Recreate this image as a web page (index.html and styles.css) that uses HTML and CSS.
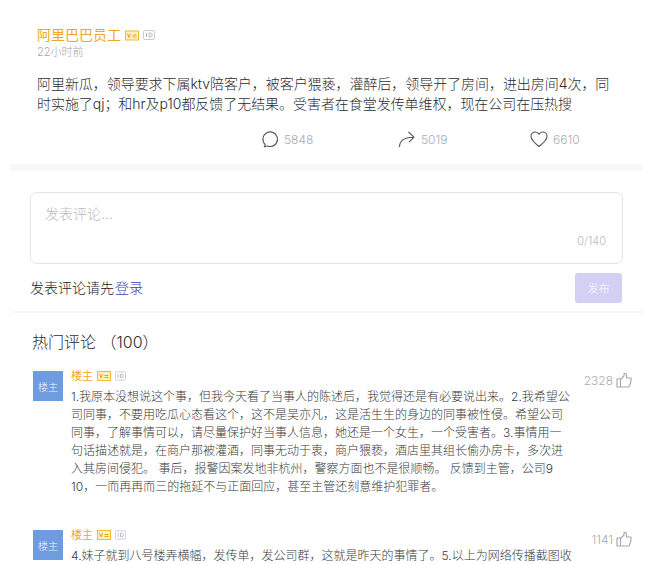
FILE: index.html
```html
<!DOCTYPE html>
<html lang="zh">
<head>
<meta charset="utf-8">
<title>评论</title>
<link rel="stylesheet" href="styles.css">
</head>
<body>
<main class="page">
  <section class="post">
    <div class="author">
      <span class="author-name">阿里巴巴员工</span>
      <svg class="badge-v" viewBox="0 0 14 10"><rect x=".5" y=".5" width="13" height="9" fill="#fff3c4" stroke="#f5b82e"/><path d="M2.500 3l1.500 4L5.500 3M7.500 4.500h4M7.500 6.500h4" fill="none" stroke="#e8a020"/></svg>
      <svg class="badge-id" viewBox="0 0 12 10"><rect x=".5" y=".5" width="11" height="9" rx="1.5" fill="none" stroke="#c9ccd6"/><path d="M3.500 3v4M6 3v4h1.200a2 2 0 0 0 0-4z" fill="none" stroke="#b5b8c4"/></svg>
    </div>
    <div class="time">22小时前</div>
    <p class="post-text">阿里新瓜，领导要求下属ktv陪客户，被客户猥亵，灌醉后，领导开了房间，进出房间4次，同时实施了qj；和hr及p10都反馈了无结果。受害者在食堂发传单维权，现在公司在压热搜</p>
    <div class="stats">
      <span class="stat stat-comment">
        <svg class="stat-icon" viewBox="0 0 18 18"><path d="M3.200 16.600c.7-.6 1-1.200 1-2.100A7.300 7.300 0 1 1 9.500 16.500c-1 0-2-.2-2.900-.6-1 .6-2.100.8-3.400.7z" fill="none" stroke="#55565c" stroke-width="1.100" stroke-linejoin="round"/></svg>
        5848
      </span>
      <span class="stat stat-share">
        <svg class="stat-icon" viewBox="0 0 18 18"><path d="M1.500 17c0-6 3.500-9.500 13.500-9.800M10.500 2l5.500 5.200-5 5" fill="none" stroke="#55565c" stroke-width="1.100" stroke-linejoin="round"/></svg>
        5019
      </span>
      <span class="stat stat-like">
        <svg class="stat-icon" viewBox="0 0 18 18"><path d="M9 16.500C5 13.400 1 10.300 1 6.300 1 3.700 3 2 5.200 2 6.800 2 8.200 2.800 9 4.300 9.800 2.800 11.200 2 12.800 2 15 2 17 3.700 17 6.300c0 4-4 7.100-8 10.200z" fill="none" stroke="#55565c" stroke-width="1.100" stroke-linejoin="round"/></svg>
        6610
      </span>
    </div>
  </section>
  <div class="band"></div>
  <section class="composer">
    <div class="input-box">
      <span class="placeholder">发表评论...</span>
      <span class="counter">0/140</span>
    </div>
    <div class="composer-foot">
      <span class="login-hint">发表评论请先<a class="login-link">登录</a></span>
      <button class="publish">发布</button>
    </div>
  </section>
  <div class="rule"></div>
  <section class="comments">
    <h2 class="comments-title">热门评论 （100）</h2>
    <article class="comment">
      <div class="avatar">楼主</div>
      <div class="comment-body">
        <div class="comment-head">
          <span class="comment-name">楼主</span>
          <svg class="badge-v small" viewBox="0 0 14 10"><rect x=".5" y=".5" width="13" height="9" fill="#fff3c4" stroke="#f5b82e"/><path d="M2.500 3l1.500 4L5.500 3M7.500 4.500h4M7.500 6.500h4" fill="none" stroke="#e8a020"/></svg>
          <svg class="badge-id small" viewBox="0 0 12 10"><rect x=".5" y=".5" width="11" height="9" rx="1.500" fill="none" stroke="#c9ccd6"/><path d="M3.500 3v4M6 3v4h1.200a2 2 0 0 0 0-4z" fill="none" stroke="#b5b8c4"/></svg>
        </div>
        <p class="comment-text">1.我原本没想说这个事，但我今天看了当事人的陈述后，我觉得还是有必要说出来。2.我希望公司同事，不要用吃瓜心态看这个，这不是吴亦凡，这是活生生的身边的同事被性侵。希望公司同事，了解事情可以，请尽量保护好当事人信息，她还是一个女生，一个受害者。3.事情用一句话描述就是，在商户那被灌酒，同事无动于衷，商户猥亵，酒店里其组长偷办房卡，多次进入其房间侵犯。 事后，报警因案发地非杭州，警察方面也不是很顺畅。 反馈到主管，公司9 10，一而再再而三的拖延不与正面回应，甚至主管还刻意维护犯罪者。</p>
      </div>
      <div class="likes">2328
        <svg class="thumb" viewBox="0 0 16 16"><path d="M1 7h3.500v8H1zM4.500 7.500 8 4V1.500c1.300-.5 2.500.5 2.500 2V6H15v3.500L13 15H4.500" fill="none" stroke="#a5a7b0" stroke-width="1.100" stroke-linejoin="round"/></svg>
      </div>
    </article>
    <article class="comment">
      <div class="avatar">楼主</div>
      <div class="comment-body">
        <div class="comment-head">
          <span class="comment-name">楼主</span>
          <svg class="badge-v small" viewBox="0 0 14 10"><rect x=".5" y=".5" width="13" height="9" fill="#fff3c4" stroke="#f5b82e"/><path d="M2.500 3l1.500 4L5.500 3M7.500 4.500h4M7.500 6.500h4" fill="none" stroke="#e8a020"/></svg>
          <svg class="badge-id small" viewBox="0 0 12 10"><rect x=".5" y=".5" width="11" height="9" rx="1.500" fill="none" stroke="#c9ccd6"/><path d="M3.500 3v4M6 3v4h1.200a2 2 0 0 0 0-4z" fill="none" stroke="#b5b8c4"/></svg>
        </div>
        <p class="comment-text">4.妹子就到八号楼弄横幅，发传单，发公司群，这就是昨天的事情了。5.以上为网络传播截图收</p>
      </div>
      <div class="likes">1141
        <svg class="thumb" viewBox="0 0 16 16"><path d="M1 7h3.500v8H1zM4.500 7.500 8 4V1.500c1.300-.5 2.500.5 2.500 2V6H15v3.500L13 15H4.500" fill="none" stroke="#a5a7b0" stroke-width="1.100" stroke-linejoin="round"/></svg>
      </div>
    </article>
  </section>
</main>
</body>
</html>
```
FILE: styles.css
```css
* { box-sizing: border-box; }
html, body { margin: 0; height: 564px; overflow: hidden; background: #fff; }
body { font-family: Inter, "Noto Sans CJK SC", sans-serif; font-weight: 300; color: #333; }
.page { width: 653px; }

.post { padding: 25px 30px 0 37px; height: 164px; }
.author { display: flex; align-items: center; gap: 4px; height: 20px; }
.author-name { font-size: 14px; line-height: 20px; font-weight: 400; color: #f5a623; }
.badge-v { width: 14px; height: 11px; }
.badge-id { width: 12px; height: 10px; }
.time { font-size: 11px; line-height: 14px; color: #a5a6af; }
.post-text { margin: 15px 0 0; font-size: 14px; line-height: 20px; letter-spacing: -.05px; color: #2b2c30; }
.stats { display: flex; margin-top: 15px; padding-left: 224px; height: 20px; }
.stat { display: flex; align-items: center; gap: 5px; font-size: 12px; color: #a9abb3; }
.stat-comment { width: 137px; }
.stat-share { width: 132px; }
.stat-icon { width: 18px; height: 18px; }

.band { height: 7px; margin: 0 10px; background: #f8f8f8; }

.composer { padding: 21px 30px 0; }
.input-box { display: flex; flex-direction: column; height: 72px; padding: 12px 13px 0 14px; border: 1px solid #e4e4e6; border-radius: 7px; }
.placeholder { font-size: 14px; line-height: 18px; color: #b9bac0; }
.counter { align-self: flex-end; margin-top: 11px; margin-right: 3px; font-size: 11px; line-height: 14px; color: #b9bac0; }
.composer-foot { display: flex; justify-content: space-between; align-items: center; margin-top: 9px; padding-right: 1px; height: 31px; }
.login-hint { font-size: 14px; line-height: 17px; margin-top: -3px; color: #222; }
.login-link { margin-left: 1px; color: #3f3fa8; }
.publish { width: 47px; height: 30px; margin-top: -1px; padding: 0; border: 0; border-radius: 3px; background: #d2d0f5; color: #f1f0fc; font: 11px Inter, "Noto Sans CJK SC", sans-serif; }

.rule { height: 2px; margin: 7px 10px 0; background: #f8f8f8; }

.comments { padding: 0 21px 0 33px; }
.comments-title { margin: 17px 0 0 -1px; font-size: 16px; line-height: 24px; font-weight: 300; color: #2b2c30; }
.comment { display: flex; align-items: flex-start; margin-top: 17px; margin-bottom: 34px; }
.avatar { flex: none; display: flex; align-items: center; justify-content: center; width: 30px; height: 30px; background: #6f9be0; color: #eef3fb; font-size: 10px; }
.comment-body { flex: none; width: 502px; margin-left: 8px; }
.comment-head { display: flex; align-items: center; gap: 4px; height: 16px; margin-top: -3px; }
.comment-name { font-size: 11px; line-height: 16px; font-weight: 400; color: #f5a623; }
.badge-v.small { width: 14px; height: 10px; }
.badge-id.small { width: 11px; height: 10px; }
.comment-text { margin: 4px 0 0; font-size: 12px; line-height: 18px; color: #3a3b40; }
.likes { flex: 1; display: flex; justify-content: flex-end; align-items: center; gap: 3px; height: 18px; font-size: 12px; color: #a9abb3; }
.thumb { width: 16px; height: 16px; }
```
